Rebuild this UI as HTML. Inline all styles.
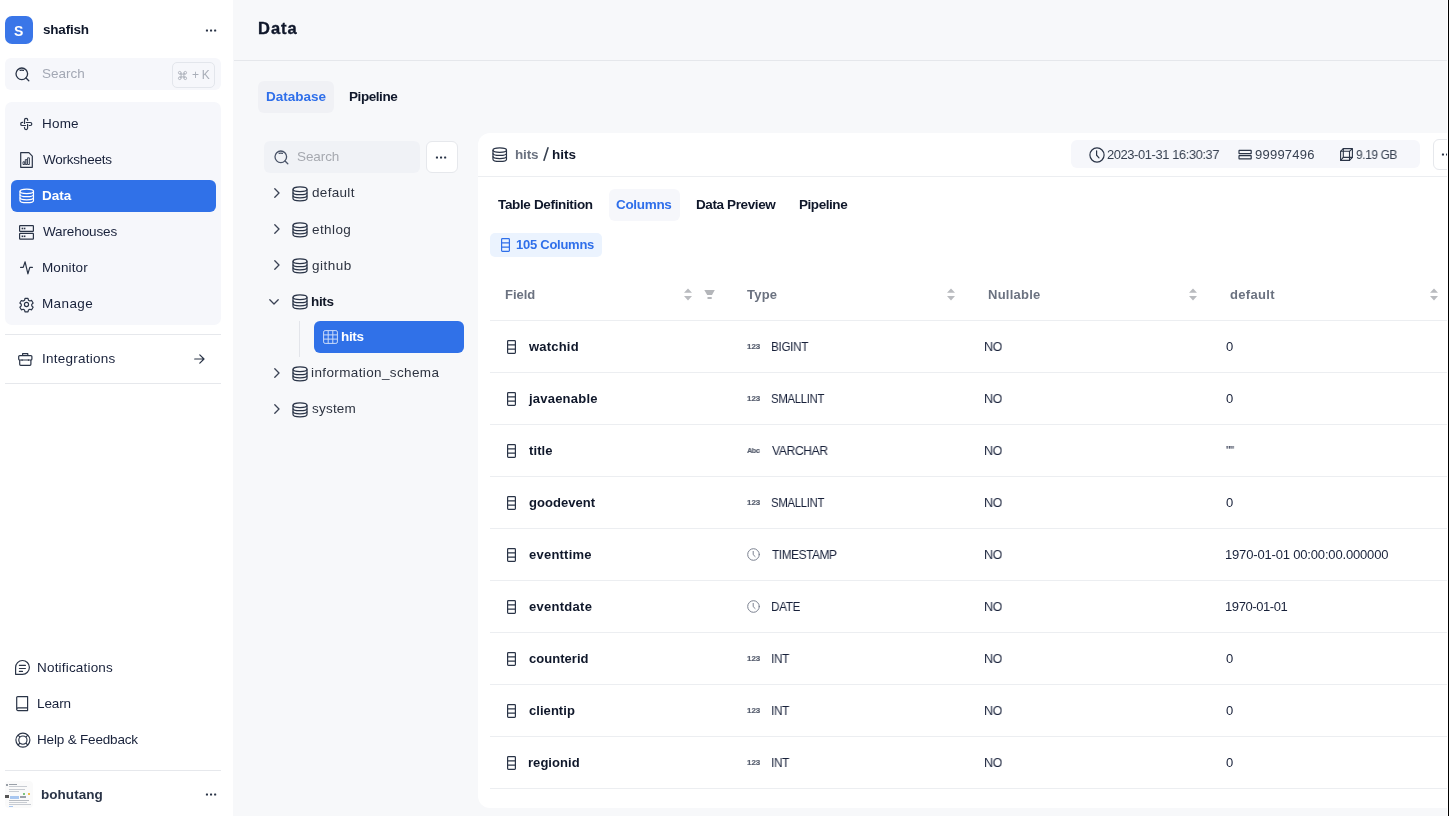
<!DOCTYPE html>
<html><head><meta charset="utf-8">
<style>
*{box-sizing:border-box;margin:0;padding:0}
html,body{width:1449px;height:816px;overflow:hidden}
body{position:relative;background:#f7f8fa;-webkit-font-smoothing:antialiased;font-family:"Liberation Sans",sans-serif;color:#1c2536;font-size:14px}
.a{position:absolute}
.t{position:absolute;white-space:nowrap;line-height:1;will-change:transform}
svg{position:absolute;overflow:visible}
.hr{position:absolute;height:1px;background:#e6e8ec}
</style></head>
<body>
<svg width="0" height="0" style="position:absolute"><defs>
<symbol id="db" viewBox="0 0 16 16"><g fill="none" stroke="currentColor" stroke-width="1.25"><ellipse cx="8" cy="3.2" rx="7" ry="2.3"/><path d="M1 3.2v9.4c0 1.3 3.1 2.3 7 2.3s7-1 7-2.3V3.2"/><path d="M1 6.4c0 1.3 3.1 2.3 7 2.3s7-1 7-2.3M1 9.6c0 1.3 3.1 2.3 7 2.3s7-1 7-2.3"/></g></symbol>
<symbol id="chev" viewBox="0 0 6 10"><path d="M0.8 0.8L5 5 0.8 9.2" fill="none" stroke="currentColor" stroke-width="1.3" stroke-linecap="round" stroke-linejoin="round"/></symbol>
<symbol id="col" viewBox="0 0 9 14"><g fill="none" stroke="currentColor" stroke-width="1.2"><rect x="0.6" y="0.6" width="7.8" height="12.8" rx="0.8"/><path d="M0.6 4.9h7.8M0.6 9.1h7.8"/></g></symbol>
<symbol id="srch" viewBox="0 0 15 15"><g fill="none" stroke="currentColor" stroke-width="1.3" stroke-linecap="round"><circle cx="6.8" cy="6.8" r="5.8"/><path d="M11 11l2.8 2.8"/><path d="M5.2 3.4q1.6-.6 3.2 0"/></g></symbol>
</defs></svg>
<div class="a" style="left:0;top:0;width:233px;height:816px;background:#fff"></div>
<div class="a" style="left:5px;top:16px;width:28px;height:28px;border-radius:7px;background:#3a76e8"></div>
<div class="t" style="left:14.28px;top:24px;font-size:14px;font-weight:bold;color:#fff;letter-spacing:0.000px;">S</div>
<div class="t" style="left:43.03px;top:23px;font-size:13.5px;font-weight:bold;color:#0f172a;letter-spacing:-0.211px;">shafish</div>
<svg style="left:205px;top:28.5px" width="12" height="4"><rect x="0.9" y="0.4" width="2.1" height="2.1" rx="0.5" fill="#2a3447"/><rect x="5.0" y="0.4" width="2.1" height="2.1" rx="0.5" fill="#2a3447"/><rect x="9.1" y="0.4" width="2.1" height="2.1" rx="0.5" fill="#2a3447"/></svg>
<div class="a" style="left:5px;top:58px;width:216px;height:32px;border-radius:6px;background:#f6f7fb"></div>
<svg style="left:15px;top:66.5px;color:#2a3447" width="15" height="15"><use href="#srch"/></svg>
<div class="t" style="left:41.99px;top:67px;font-size:13.5px;color:#a3a8b4;letter-spacing:-0.028px;">Search</div>
<div class="a" style="left:172px;top:62px;width:43px;height:26px;border:1px solid #e3e6ec;border-radius:5px"></div>
<svg style="left:178px;top:70.5px" width="9" height="9" viewBox="0 0 9 9"><g fill="none" stroke="#a9aeb8" stroke-width="0.9"><path d="M3.1 1.6V7.4M5.9 1.6V7.4M1.6 3.1H7.4M1.6 5.9H7.4"/><circle cx="1.7" cy="1.7" r="1.3"/><circle cx="7.3" cy="1.7" r="1.3"/><circle cx="1.7" cy="7.3" r="1.3"/><circle cx="7.3" cy="7.3" r="1.3"/></g></svg>
<div class="t" style="left:191.60px;top:69px;font-size:12px;color:#a9aeb8;letter-spacing:-0.240px;">+ K</div>
<div class="a" style="left:5px;top:102px;width:216px;height:223px;border-radius:7px;background:#f6f7fb"></div>
<div class="a" style="left:11px;top:180px;width:205px;height:32px;border-radius:6px;background:#3071e8"></div>
<div class="t" style="left:41.52px;top:117px;font-size:13.5px;color:#18213a;letter-spacing:0.203px;">Home</div>
<div class="t" style="left:42.63px;top:153px;font-size:13.5px;color:#18213a;letter-spacing:-0.230px;">Worksheets</div>
<div class="t" style="left:41.82px;top:189px;font-size:13.5px;font-weight:bold;color:#fff;letter-spacing:0.005px;">Data</div>
<div class="t" style="left:42.63px;top:225px;font-size:13.5px;color:#18213a;letter-spacing:-0.125px;">Warehouses</div>
<div class="t" style="left:41.52px;top:261px;font-size:13.5px;color:#18213a;letter-spacing:0.121px;">Monitor</div>
<div class="t" style="left:41.52px;top:297px;font-size:13.5px;color:#18213a;letter-spacing:0.377px;">Manage</div>
<div class="hr" style="left:5px;top:334px;width:216px"></div>
<div class="t" style="left:42.19px;top:352px;font-size:13.5px;color:#18213a;letter-spacing:0.250px;">Integrations</div>
<div class="hr" style="left:5px;top:383px;width:216px"></div>
<div class="t" style="left:37.32px;top:661px;font-size:13.5px;color:#18213a;letter-spacing:0.187px;">Notifications</div>
<div class="t" style="left:37.32px;top:697px;font-size:13.5px;color:#18213a;letter-spacing:-0.109px;">Learn</div>
<div class="t" style="left:37.32px;top:733px;font-size:13.5px;color:#18213a;letter-spacing:-0.176px;">Help &amp; Feedback</div>
<div class="hr" style="left:5px;top:770px;width:216px"></div>
<div class="t" style="left:40.92px;top:788px;font-size:13.5px;font-weight:bold;color:#2a3447;letter-spacing:0.038px;">bohutang</div>
<svg style="left:205px;top:793px" width="12" height="4"><rect x="0.9" y="0.4" width="2.1" height="2.1" rx="0.5" fill="#2a3447"/><rect x="5.0" y="0.4" width="2.1" height="2.1" rx="0.5" fill="#2a3447"/><rect x="9.1" y="0.4" width="2.1" height="2.1" rx="0.5" fill="#2a3447"/></svg>
<!-- sidebar icons -->
<svg style="left:18px;top:116px" width="17" height="16" viewBox="0 0 17 16"><path d="M6.5 7.4V4a1.6 1.6 0 0 1 3.2 0V4.3M8.3 6.5H12.3a1.5 1.5 0 0 1 0 3H11.3M9.6 8.3V12a1.55 1.55 0 0 1-3.1 0V11.4M7.6 9.5H4.3a1.6 1.6 0 0 1 0-3.2H4.7" fill="none" stroke="#2a3447" stroke-width="1.2" stroke-linecap="round" stroke-linejoin="round"/></svg>
<svg style="left:20px;top:152px" width="13" height="16" viewBox="0 0 13 16"><path d="M0.7 0.7H8.9L12.3 4.1V15.3H0.7Z" fill="none" stroke="#2a3447" stroke-width="1.2" stroke-linejoin="round"/><path d="M3 12.5h1.7V9.8H3Z M5.3 12.5H7V7.6H5.3Z M7.6 12.5H9.4V5.8H7.6Z" fill="none" stroke="#2a3447" stroke-width="0.9"/></svg>
<svg style="left:19px;top:188px;color:#fff" width="15.5" height="16"><use href="#db"/></svg>
<svg style="left:19px;top:224.5px" width="15" height="15" viewBox="0 0 15 15"><g fill="none" stroke="#2a3447" stroke-width="1.2"><rect x="0.6" y="0.6" width="13.8" height="5.8" rx="0.6"/><rect x="0.6" y="8.4" width="13.8" height="5.8" rx="0.6"/></g><g fill="#2a3447"><rect x="2.6" y="2.7" width="1.6" height="1.6"/><rect x="4.8" y="2.7" width="1.6" height="1.6"/><rect x="2.6" y="10.5" width="1.6" height="1.6"/><rect x="4.8" y="10.5" width="1.6" height="1.6"/></g></svg>
<svg style="left:20px;top:261px" width="13" height="14" viewBox="0 0 13 14"><path d="M0.6 6.4H3.2L5.1 0.8L7.9 12.8L9.8 6.4H12.4" fill="none" stroke="#2a3447" stroke-width="1.2" stroke-linecap="round" stroke-linejoin="round"/></svg>
<svg style="left:18.5px;top:296.5px" width="15" height="15" viewBox="0 0 24 24"><g fill="none" stroke="#2a3447" stroke-width="1.9" stroke-linejoin="round"><path d="M9.6 2.2h4.8l.7 2.9 2.2 1.3 2.9-.9 2.4 4.1-2.2 2.1v2.6l2.2 2.1-2.4 4.1-2.9-.9-2.2 1.3-.7 2.9H9.6l-.7-2.9-2.2-1.3-2.9.9-2.4-4.1 2.2-2.1v-2.6L1.4 9.7l2.4-4.1 2.9.9 2.2-1.3Z"/><circle cx="12" cy="12" r="3.3"/></g></svg>
<svg style="left:18px;top:352.5px" width="15" height="13" viewBox="0 0 15 13"><g fill="none" stroke="#2a3447" stroke-width="1.2" stroke-linejoin="round"><path d="M4.6 2.6V0.7H9.8V2.6"/><rect x="0.7" y="2.6" width="13.2" height="4.4" rx="1"/><path d="M1.7 7V11.3a1 1 0 0 0 1 1H11.9a1 1 0 0 0 1-1V7"/><path d="M4.1 6.4v1.3M10.5 6.4v1.3"/></g></svg>
<svg style="left:193.5px;top:353.5px" width="11" height="10" viewBox="0 0 11 10"><path d="M0.7 5H10M5.8 0.8L10 5 5.8 9.2" fill="none" stroke="#2a3447" stroke-width="1.2" stroke-linecap="round" stroke-linejoin="round"/></svg>
<svg style="left:14.5px;top:660px" width="16" height="16" viewBox="0 0 16 16"><g fill="none" stroke="#2a3447" stroke-width="1.2" stroke-linecap="round" stroke-linejoin="round"><path d="M0.6 14.3V7.5A6.9 6.9 0 1 1 7.5 14.3Z"/><path d="M4.4 5.4h6M4.4 8.5h6M4.4 11.4h3.1"/></g></svg>
<svg style="left:16px;top:695.5px" width="13" height="16" viewBox="0 0 13 16"><g fill="none" stroke="#2a3447" stroke-width="1.2" stroke-linejoin="round"><path d="M0.7 13.2V1.6a1 1 0 0 1 1-1H11.6V14.6H2a1.3 1.3 0 0 1-1.3-1.4a1.3 1.3 0 0 1 1.3-1.3H11.6"/></g></svg>
<svg style="left:14.5px;top:731.5px" width="16" height="16" viewBox="0 0 16 16"><g fill="none" stroke="#2a3447" stroke-width="1.15"><circle cx="7.9" cy="8.1" r="7"/><circle cx="7.9" cy="8.1" r="4.1"/><path d="M5 5.2L2.95 3.15M10.8 5.2L12.85 3.15M5 11L2.95 13.05M10.8 11L12.85 13.05"/></g></svg>
<div class="a" style="left:5px;top:781px;width:28px;height:27px;background:#fafafa;border-radius:4px"></div>
<svg style="left:5px;top:781px" width="28" height="27" viewBox="0 0 28 27"><g fill="#9aa0a8"><rect x="1" y="3" width="2" height="2"/><rect x="4" y="3" width="8" height="1"/><rect x="4" y="5" width="18" height="1" fill="#c8ccd2"/><rect x="4" y="8" width="16" height="1" fill="#c8ccd2"/><rect x="4" y="10" width="10" height="1" fill="#c8ccd2"/><rect x="0" y="14" width="4" height="3" fill="#555"/><rect x="5" y="15" width="9" height="3" fill="#a9c7f0"/><rect x="15" y="15" width="6" height="2"/><rect x="4" y="19" width="20" height="1" fill="#b8bcc2"/><rect x="4" y="21" width="18" height="1" fill="#c8ccd2"/><rect x="4" y="23" width="22" height="1" fill="#c8ccd2"/><rect x="4" y="25" width="4" height="1" fill="#a9c7f0"/><rect x="18" y="12" width="2" height="2" fill="#7cc47c"/><rect x="23" y="12" width="2" height="2" fill="#f0c050"/></g></svg>
<div class="t" style="left:258.03px;top:20px;font-size:16.5px;font-weight:bold;color:#0f172a;letter-spacing:0.962px;-webkit-text-stroke:0.35px #0f172a;">Data</div>
<div class="hr" style="left:234px;top:60px;width:1215px;background:#e5e7eb"></div>
<div class="a" style="left:258px;top:81px;width:75.5px;height:31.5px;border-radius:6px;background:#f0f1f5"></div>
<div class="t" style="left:265.52px;top:90px;font-size:13.5px;font-weight:bold;color:#2f6fea;letter-spacing:0.006px;">Database</div>
<div class="t" style="left:349.12px;top:90px;font-size:13.5px;font-weight:bold;color:#0f172a;letter-spacing:-0.432px;">Pipeline</div>
<div class="a" style="left:264px;top:141px;width:156px;height:32px;border-radius:6px;background:#f0f2f6"></div>
<svg style="left:274px;top:150px;color:#4a5468" width="15" height="15"><use href="#srch"/></svg>
<div class="t" style="left:296.69px;top:150px;font-size:13.5px;color:#a6a9b0;letter-spacing:-0.088px;">Search</div>
<div class="a" style="left:426px;top:141px;width:32px;height:32px;border-radius:6px;background:#fff;border:1px solid #e6e8ec"></div>
<svg style="left:435px;top:155.6px" width="12" height="4"><rect x="0.9" y="0.4" width="2.1" height="2.1" rx="0.5" fill="#2a3447"/><rect x="5.0" y="0.4" width="2.1" height="2.1" rx="0.5" fill="#2a3447"/><rect x="9.1" y="0.4" width="2.1" height="2.1" rx="0.5" fill="#2a3447"/></svg>
<svg style="left:273.5px;top:188px;color:#3a4254" width="6" height="10"><use href="#chev"/></svg>
<svg style="left:292px;top:185.5px;color:#2a3447" width="16" height="16"><use href="#db"/></svg>
<div class="t" style="left:311.66px;top:186px;font-size:13.5px;color:#2d3340;letter-spacing:0.318px;">default</div>
<svg style="left:273.5px;top:224px;color:#3a4254" width="6" height="10"><use href="#chev"/></svg>
<svg style="left:292px;top:221.5px;color:#2a3447" width="16" height="16"><use href="#db"/></svg>
<div class="t" style="left:311.66px;top:223px;font-size:13.5px;color:#2d3340;letter-spacing:0.406px;">ethlog</div>
<svg style="left:273.5px;top:260px;color:#3a4254" width="6" height="10"><use href="#chev"/></svg>
<svg style="left:292px;top:257.5px;color:#2a3447" width="16" height="16"><use href="#db"/></svg>
<div class="t" style="left:311.66px;top:259px;font-size:13.5px;color:#2d3340;letter-spacing:0.479px;">github</div>
<svg style="left:269px;top:299px;color:#3a4254" width="10" height="6" viewBox="0 0 10 6"><path d="M0.8 0.8L5 5 9.2 0.8" fill="none" stroke="currentColor" stroke-width="1.3" stroke-linecap="round" stroke-linejoin="round"/></svg>
<svg style="left:292px;top:293.5px;color:#2a3447" width="16" height="16"><use href="#db"/></svg>
<div class="t" style="left:311.25px;top:295px;font-size:13.5px;font-weight:bold;color:#111827;letter-spacing:-0.326px;">hits</div>
<svg style="left:273.5px;top:368px;color:#3a4254" width="6" height="10"><use href="#chev"/></svg>
<svg style="left:292px;top:365.5px;color:#2a3447" width="16" height="16"><use href="#db"/></svg>
<div class="t" style="left:311.32px;top:366px;font-size:13.5px;color:#2d3340;letter-spacing:0.377px;">information_schema</div>
<svg style="left:273.5px;top:404px;color:#3a4254" width="6" height="10"><use href="#chev"/></svg>
<svg style="left:292px;top:401.5px;color:#2a3447" width="16" height="16"><use href="#db"/></svg>
<div class="t" style="left:311.80px;top:402px;font-size:13.5px;color:#2d3340;letter-spacing:0.218px;">system</div>
<div class="a" style="left:299px;top:321px;width:1px;height:36px;background:#e3e5ea"></div>
<div class="a" style="left:314px;top:321px;width:150px;height:32px;border-radius:6px;background:#3071e8"></div>
<svg style="left:322.5px;top:330px" width="15" height="14" viewBox="0 0 15 14"><g fill="none" stroke="#fff" stroke-width="1" opacity="0.75"><rect x="0.6" y="0.6" width="13.8" height="12.8" rx="1.5"/><path d="M5.2 0.6v12.8M9.8 0.6v12.8M0.6 4.9h13.8M0.6 9.1h13.8"/></g></svg>
<div class="t" style="left:341.36px;top:330px;font-size:13.5px;font-weight:bold;color:#fff;letter-spacing:-0.359px;">hits</div>
<div class="a" style="left:478px;top:133px;width:1000px;height:675px;border-radius:12px;background:#fff"></div>
<svg style="left:492px;top:146.5px;color:#2a3447" width="15.5" height="15.5"><use href="#db"/></svg>
<div class="t" style="left:515.25px;top:148px;font-size:13.5px;font-weight:bold;color:#6b7280;letter-spacing:-0.159px;">hits</div>
<svg style="left:543px;top:147px" width="6" height="14" viewBox="0 0 6 14"><path d="M5 0.8L1 13.2" stroke="#374151" stroke-width="1.6" stroke-linecap="round"/></svg>
<div class="t" style="left:551.85px;top:148px;font-size:13.5px;font-weight:bold;color:#0f172a;letter-spacing:-0.026px;">hits</div>
<div class="a" style="left:1071px;top:140px;width:349px;height:28px;border-radius:6px;background:#f6f7fb"></div>
<svg style="left:1089px;top:146.5px" width="16" height="16" viewBox="0 0 16 16"><g fill="none" stroke="#2a3447" stroke-width="1.2" stroke-linecap="round"><circle cx="8" cy="8" r="7.1"/><path d="M7.6 3.8v4.4l2.4 2.6"/></g></svg>
<div class="t" style="left:1106.95px;top:148px;font-size:13px;color:#374151;letter-spacing:-0.450px;transform:scaleX(0.9982);transform-origin:0 0;">2023-01-31 16:30:37</div>
<svg style="left:1238px;top:149px" width="14" height="11" viewBox="0 0 14 11"><g fill="none" stroke="#2a3447" stroke-width="1.15"><rect x="1" y="1.4" width="12.2" height="3.2" rx="0.3"/><rect x="1" y="6.6" width="12.2" height="3.2" rx="0.3"/></g></svg>
<div class="t" style="left:1255.01px;top:148px;font-size:13px;color:#374151;letter-spacing:0.236px;">99997496</div>
<svg style="left:1340px;top:148px" width="13" height="13" viewBox="0 0 13 13"><g fill="none" stroke="#2a3447" stroke-width="1.1" stroke-linejoin="round"><rect x="0.6" y="3.3" width="8.9" height="9.1"/><rect x="3.3" y="0.6" width="9.1" height="8.8"/><path d="M0.6 3.3L3.3 0.6M9.5 3.3L12.4 0.6M9.5 12.4L12.4 9.4M0.6 12.4L3.3 9.4"/></g></svg>
<div class="t" style="left:1356.46px;top:148px;font-size:13px;color:#374151;letter-spacing:-0.450px;transform:scaleX(0.9197);transform-origin:0 0;">9.19 GB</div>
<div class="a" style="left:1433px;top:139px;width:32px;height:31px;border-radius:6px;background:#fff;border:1px solid #e6e8ec"></div>
<svg style="left:1441px;top:153px" width="12" height="4"><rect x="0.9" y="0.4" width="2.1" height="2.1" rx="0.5" fill="#2a3447"/><rect x="5.0" y="0.4" width="2.1" height="2.1" rx="0.5" fill="#2a3447"/></svg>
<div class="hr" style="left:478px;top:176px;width:971px;background:#eceef1"></div>
<div class="a" style="left:609px;top:189px;width:71px;height:32px;border-radius:6px;background:#f6f7fb"></div>
<div class="t" style="left:498.06px;top:198px;font-size:13.5px;font-weight:bold;color:#0f172a;letter-spacing:-0.346px;">Table Definition</div>
<div class="t" style="left:616.26px;top:198px;font-size:13.5px;font-weight:bold;color:#2f6fea;letter-spacing:-0.322px;">Columns</div>
<div class="t" style="left:695.52px;top:198px;font-size:13.5px;font-weight:bold;color:#0f172a;letter-spacing:-0.384px;">Data Preview</div>
<div class="t" style="left:799.32px;top:198px;font-size:13.5px;font-weight:bold;color:#0f172a;letter-spacing:-0.446px;">Pipeline</div>
<div class="a" style="left:490px;top:233px;width:112px;height:24px;border-radius:5px;background:#ebf3fe"></div>
<svg style="left:501px;top:238px;color:#2f6fea" width="9" height="14"><use href="#col"/></svg>
<div class="t" style="left:516.22px;top:238px;font-size:13px;font-weight:bold;color:#2f6fea;letter-spacing:-0.263px;">105 Columns</div>
<div class="t" style="left:505.15px;top:288px;font-size:13px;font-weight:bold;color:#6b7280;letter-spacing:-0.041px;">Field</div>
<div class="t" style="left:747.37px;top:288px;font-size:13px;font-weight:bold;color:#6b7280;letter-spacing:0.235px;">Type</div>
<div class="t" style="left:988.15px;top:288px;font-size:13px;font-weight:bold;color:#6b7280;letter-spacing:0.247px;">Nullable</div>
<div class="t" style="left:1229.98px;top:288px;font-size:13px;font-weight:bold;color:#6b7280;letter-spacing:0.329px;">default</div>
<svg style="left:684px;top:288px" width="8" height="13" viewBox="0 0 8 13"><path d="M4 0.4L8 4.8H0Z M0 8H8L4 12.5Z" fill="#b9bbbf"/></svg>
<svg style="left:947px;top:288px" width="8" height="13" viewBox="0 0 8 13"><path d="M4 0.4L8 4.8H0Z M0 8H8L4 12.5Z" fill="#b9bbbf"/></svg>
<svg style="left:1189px;top:288px" width="8" height="13" viewBox="0 0 8 13"><path d="M4 0.4L8 4.8H0Z M0 8H8L4 12.5Z" fill="#b9bbbf"/></svg>
<svg style="left:1430px;top:288px" width="8" height="13" viewBox="0 0 8 13"><path d="M4 0.4L8 4.8H0Z M0 8H8L4 12.5Z" fill="#b9bbbf"/></svg>
<svg style="left:704px;top:290px" width="11" height="9" viewBox="0 0 11 9"><path d="M0.3 0H10.8L8 4.9H3.2Z M3.5 6.9H7.7V8.9H3.5Z" fill="#b4b6ba"/></svg>
<div class="hr" style="left:490px;top:320px;width:957px;background:#eceef1"></div>
<div class="hr" style="left:490px;top:372px;width:957px;background:#eceef1"></div>
<div class="hr" style="left:490px;top:424px;width:957px;background:#eceef1"></div>
<div class="hr" style="left:490px;top:476px;width:957px;background:#eceef1"></div>
<div class="hr" style="left:490px;top:528px;width:957px;background:#eceef1"></div>
<div class="hr" style="left:490px;top:580px;width:957px;background:#eceef1"></div>
<div class="hr" style="left:490px;top:632px;width:957px;background:#eceef1"></div>
<div class="hr" style="left:490px;top:684px;width:957px;background:#eceef1"></div>
<div class="hr" style="left:490px;top:736px;width:957px;background:#eceef1"></div>
<div class="hr" style="left:490px;top:788px;width:957px;background:#eceef1"></div>
<svg style="left:506.5px;top:339.5px;color:#2a3447" width="9" height="14"><use href="#col"/></svg>
<div class="t" style="left:529.17px;top:340px;font-size:13px;font-weight:bold;color:#0f172a;letter-spacing:0.203px;">watchid</div>
<div class="t" style="left:747.02px;top:343px;font-size:8px;font-weight:bold;color:#596070;letter-spacing:-0.030px;-webkit-text-stroke:0.2px #596070;">123</div>
<div class="t" style="left:770.85px;top:340px;font-size:13px;color:#18213a;letter-spacing:-0.450px;transform:scaleX(0.9094);transform-origin:0 0;">BIGINT</div>
<div class="t" style="left:984.30px;top:340px;font-size:13px;color:#18213a;letter-spacing:-0.450px;transform:scaleX(0.9620);transform-origin:0 0;">NO</div>
<div class="t" style="left:1225.88px;top:340px;font-size:13px;color:#18213a;letter-spacing:0.000px;">0</div>
<svg style="left:506.5px;top:391.5px;color:#2a3447" width="9" height="14"><use href="#col"/></svg>
<div class="t" style="left:529.30px;top:392px;font-size:13px;font-weight:bold;color:#0f172a;letter-spacing:0.218px;">javaenable</div>
<div class="t" style="left:747.02px;top:395px;font-size:8px;font-weight:bold;color:#596070;letter-spacing:-0.030px;-webkit-text-stroke:0.2px #596070;">123</div>
<div class="t" style="left:771.28px;top:392px;font-size:13px;color:#18213a;letter-spacing:-0.450px;transform:scaleX(0.8846);transform-origin:0 0;">SMALLINT</div>
<div class="t" style="left:984.30px;top:392px;font-size:13px;color:#18213a;letter-spacing:-0.450px;transform:scaleX(0.9620);transform-origin:0 0;">NO</div>
<div class="t" style="left:1225.88px;top:392px;font-size:13px;color:#18213a;letter-spacing:0.000px;">0</div>
<svg style="left:506.5px;top:443.5px;color:#2a3447" width="9" height="14"><use href="#col"/></svg>
<div class="t" style="left:528.97px;top:444px;font-size:13px;font-weight:bold;color:#0f172a;letter-spacing:0.102px;">title</div>
<div class="t" style="left:747.32px;top:447px;font-size:8px;font-weight:bold;color:#596070;letter-spacing:-0.450px;transform:scaleX(0.9071);transform-origin:0 0;-webkit-text-stroke:0.2px #596070;">Abc</div>
<div class="t" style="left:771.74px;top:444px;font-size:13px;color:#18213a;letter-spacing:-0.450px;transform:scaleX(0.9368);transform-origin:0 0;">VARCHAR</div>
<div class="t" style="left:984.30px;top:444px;font-size:13px;color:#18213a;letter-spacing:-0.450px;transform:scaleX(0.9620);transform-origin:0 0;">NO</div>
<div class="t" style="left:1225.92px;top:444px;font-size:13px;color:#18213a;letter-spacing:-0.450px;transform:scaleX(0.9173);transform-origin:0 0;">""</div>
<svg style="left:506.5px;top:495.5px;color:#2a3447" width="9" height="14"><use href="#col"/></svg>
<div class="t" style="left:528.58px;top:496px;font-size:13px;font-weight:bold;color:#0f172a;letter-spacing:0.042px;">goodevent</div>
<div class="t" style="left:747.02px;top:499px;font-size:8px;font-weight:bold;color:#596070;letter-spacing:-0.030px;-webkit-text-stroke:0.2px #596070;">123</div>
<div class="t" style="left:771.28px;top:496px;font-size:13px;color:#18213a;letter-spacing:-0.450px;transform:scaleX(0.8846);transform-origin:0 0;">SMALLINT</div>
<div class="t" style="left:984.30px;top:496px;font-size:13px;color:#18213a;letter-spacing:-0.450px;transform:scaleX(0.9620);transform-origin:0 0;">NO</div>
<div class="t" style="left:1225.88px;top:496px;font-size:13px;color:#18213a;letter-spacing:0.000px;">0</div>
<svg style="left:506.5px;top:547.5px;color:#2a3447" width="9" height="14"><use href="#col"/></svg>
<div class="t" style="left:528.58px;top:548px;font-size:13px;font-weight:bold;color:#0f172a;letter-spacing:0.229px;">eventtime</div>
<svg style="left:746.5px;top:547.5px" width="13" height="13" viewBox="0 0 13 13"><g fill="none" stroke="#7b8190" stroke-width="1" stroke-linecap="round"><circle cx="6.5" cy="6.5" r="5.8"/><path d="M6.2 3.4v3.3l1.9 1.8"/></g></svg>
<div class="t" style="left:771.56px;top:548px;font-size:13px;color:#18213a;letter-spacing:-0.450px;transform:scaleX(0.9109);transform-origin:0 0;">TIMESTAMP</div>
<div class="t" style="left:984.30px;top:548px;font-size:13px;color:#18213a;letter-spacing:-0.450px;transform:scaleX(0.9620);transform-origin:0 0;">NO</div>
<div class="t" style="left:1225.43px;top:548px;font-size:13px;color:#18213a;letter-spacing:-0.171px;">1970-01-01 00:00:00.000000</div>
<svg style="left:506.5px;top:599.5px;color:#2a3447" width="9" height="14"><use href="#col"/></svg>
<div class="t" style="left:528.58px;top:600px;font-size:13px;font-weight:bold;color:#0f172a;letter-spacing:0.271px;">eventdate</div>
<svg style="left:746.5px;top:599.5px" width="13" height="13" viewBox="0 0 13 13"><g fill="none" stroke="#7b8190" stroke-width="1" stroke-linecap="round"><circle cx="6.5" cy="6.5" r="5.8"/><path d="M6.2 3.4v3.3l1.9 1.8"/></g></svg>
<div class="t" style="left:770.86px;top:600px;font-size:13px;color:#18213a;letter-spacing:-0.450px;transform:scaleX(0.9070);transform-origin:0 0;">DATE</div>
<div class="t" style="left:984.30px;top:600px;font-size:13px;color:#18213a;letter-spacing:-0.450px;transform:scaleX(0.9620);transform-origin:0 0;">NO</div>
<div class="t" style="left:1225.43px;top:600px;font-size:13px;color:#18213a;letter-spacing:-0.415px;">1970-01-01</div>
<svg style="left:506.5px;top:651.5px;color:#2a3447" width="9" height="14"><use href="#col"/></svg>
<div class="t" style="left:528.58px;top:652px;font-size:13px;font-weight:bold;color:#0f172a;letter-spacing:0.031px;">counterid</div>
<div class="t" style="left:747.02px;top:655px;font-size:8px;font-weight:bold;color:#596070;letter-spacing:-0.030px;-webkit-text-stroke:0.2px #596070;">123</div>
<div class="t" style="left:770.72px;top:652px;font-size:13px;color:#18213a;letter-spacing:-0.450px;transform:scaleX(0.9194);transform-origin:0 0;">INT</div>
<div class="t" style="left:984.30px;top:652px;font-size:13px;color:#18213a;letter-spacing:-0.450px;transform:scaleX(0.9620);transform-origin:0 0;">NO</div>
<div class="t" style="left:1225.88px;top:652px;font-size:13px;color:#18213a;letter-spacing:0.000px;">0</div>
<svg style="left:506.5px;top:703.5px;color:#2a3447" width="9" height="14"><use href="#col"/></svg>
<div class="t" style="left:528.58px;top:704px;font-size:13px;font-weight:bold;color:#0f172a;letter-spacing:0.049px;">clientip</div>
<div class="t" style="left:747.02px;top:707px;font-size:8px;font-weight:bold;color:#596070;letter-spacing:-0.030px;-webkit-text-stroke:0.2px #596070;">123</div>
<div class="t" style="left:770.72px;top:704px;font-size:13px;color:#18213a;letter-spacing:-0.450px;transform:scaleX(0.9194);transform-origin:0 0;">INT</div>
<div class="t" style="left:984.30px;top:704px;font-size:13px;color:#18213a;letter-spacing:-0.450px;transform:scaleX(0.9620);transform-origin:0 0;">NO</div>
<div class="t" style="left:1225.88px;top:704px;font-size:13px;color:#18213a;letter-spacing:0.000px;">0</div>
<svg style="left:506.5px;top:755.5px;color:#2a3447" width="9" height="14"><use href="#col"/></svg>
<div class="t" style="left:528.25px;top:756px;font-size:13px;font-weight:bold;color:#0f172a;letter-spacing:0.044px;">regionid</div>
<div class="t" style="left:747.02px;top:759px;font-size:8px;font-weight:bold;color:#596070;letter-spacing:-0.030px;-webkit-text-stroke:0.2px #596070;">123</div>
<div class="t" style="left:770.72px;top:756px;font-size:13px;color:#18213a;letter-spacing:-0.450px;transform:scaleX(0.9194);transform-origin:0 0;">INT</div>
<div class="t" style="left:984.30px;top:756px;font-size:13px;color:#18213a;letter-spacing:-0.450px;transform:scaleX(0.9620);transform-origin:0 0;">NO</div>
<div class="t" style="left:1225.88px;top:756px;font-size:13px;color:#18213a;letter-spacing:0.000px;">0</div>
<div class="a" style="left:1447px;top:0;width:1px;height:816px;background:#fff"></div>
<div class="a" style="left:1448px;top:0;width:1px;height:816px;background:#000"></div>
</body></html>
